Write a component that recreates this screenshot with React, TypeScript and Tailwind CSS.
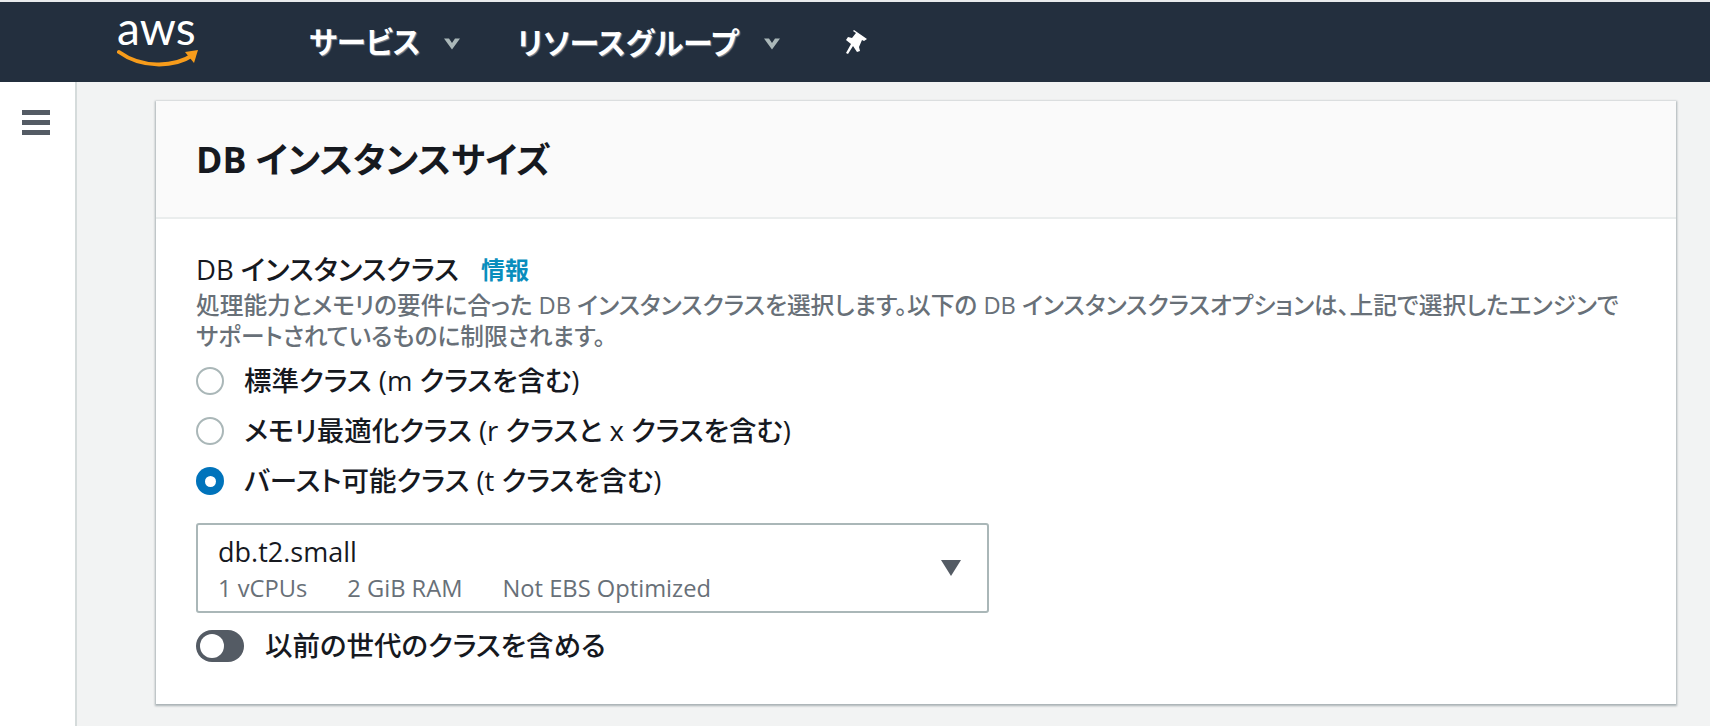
import React from "react";

const Radio = ({ checked, label }: { checked?: boolean; label: string }) => (
	<div className="flex items-center h-[28px]">
		{checked ? (
			<span className="w-[28px] h-[28px] rounded-full bg-[#0073bb] flex items-center justify-center">
				<span className="w-[11px] h-[11px] rounded-full bg-white" />
			</span>
		) : (
			<span className="w-[28px] h-[28px] rounded-full border-2 border-[#aab7b8] bg-white" />
		)}
		<span className="ml-[20px] text-[27.5px] leading-[28px] font-medium text-[#16191f]">
			{label}
		</span>
	</div>
);

const Caret = () => (
	<svg width="18" height="13" viewBox="0 0 18 13" className="ml-[23px] mt-[3px]">
		<path d="M1 1.5 L6 1.5 L9 6 L12 1.5 L17 1.5 L9 12.5 Z" fill="#aab7b8" />
	</svg>
);

const App = () => {
	return (
		<div className="w-[1710px] h-[726px] overflow-hidden flex flex-col bg-[#f2f3f3] font-['Open_Sans','Noto_Sans_CJK_JP',sans-serif] [font-feature-settings:'palt']">
			<div className="h-[2px] bg-[#e9ebed]" />
			<nav className="h-[80px] bg-[#232f3e] flex items-center">
				<div className="w-[309px] relative h-full">
					<span className="absolute left-[117px] top-[1px] text-[46px] leading-[50px] text-white font-['Lato',sans-serif]">
						aws
					</span>
					<svg width="84" height="26" viewBox="0 0 84 26" className="absolute left-[117px] top-[46px]">
						<path d="M2 4 C24 20 56 20 76 7" fill="none" stroke="#f79c1b" strokeWidth="4" strokeLinecap="round" />
						<path d="M68 4 L81 2 L77 15 Z" fill="#f79c1b" />
					</svg>
				</div>
				<div className="flex items-center w-[208px]">
					<span className="text-[29.5px] font-bold text-white [text-shadow:1px_1px_1px_#8a8f96]">サービス</span>
					<Caret />
				</div>
				<div className="flex items-center w-[333px]">
					<span className="mr-[2px] text-[30px] font-bold text-white [text-shadow:1px_1px_1px_#8a8f96]">リソースグループ</span>
					<Caret />
				</div>
				<svg width="26" height="28" viewBox="0 0 26 28" className="ml-[-5px]">
					<path d="M9 2 L22 11 L19 13 L17 12 L14 19 L15 23 L12 24 L8 18 L3 26 L1 25 L6 16 L1 12 L3 9 L7 10 L11 5 L8 3 Z" fill="#ffffff" />
				</svg>
			</nav>
			<div className="flex flex-1 min-h-0">
				<aside className="w-[77px] bg-white border-r-2 border-[#d5dbdb] pl-[22px] pt-[28px]">
					<div className="flex flex-col gap-[5px] w-[28px]">
						<span className="h-[5px] bg-[#545b64]" />
						<span className="h-[5px] bg-[#545b64]" />
						<span className="h-[5px] bg-[#545b64]" />
					</div>
				</aside>
				<main className="flex-1 pl-[79px] pr-[34px] pt-[19px]">
					<section className="h-[603px] bg-white shadow-[0_1px_2px_1px_rgba(0,28,36,0.3)]">
						<header className="h-[118px] bg-[#fafafa] border-b-2 border-[#eaeded] pl-[40px] pt-[2px] flex items-center">
							<h2 className="text-[35.7px] font-bold text-[#16191f]">DB インスタンスサイズ</h2>
						</header>
						<div className="pl-[40px] pr-[40px] pt-[33px]">
							<div className="flex items-center h-[36px]">
								<span className="text-[27.5px] font-medium text-[#16191f]">DB インスタンスクラス</span>
								<span className="ml-[22px] text-[24px] font-bold text-[#0a8ebd]">情報</span>
							</div>
							<p className="text-[23.7px] leading-[30.5px] font-medium text-[#687078] whitespace-nowrap pt-[2px]">
								処理能力とメモリの要件に合った DB インスタンスクラスを選択します。以下の DB インスタンスクラスオプションは、上記で選択したエンジンで
								<br />
								サポートされているものに制限されます。
							</p>
							<div className="flex flex-col gap-[22px] mt-[16px]">
								<Radio label="標準クラス (m クラスを含む)" />
								<Radio label="メモリ最適化クラス (r クラスと x クラスを含む)" />
								<Radio checked label="バースト可能クラス (t クラスを含む)" />
							</div>
							<div className="mt-[28px] w-[793px] h-[90px] border-2 border-[#aab7b8] rounded-[3px] pl-[20px] pr-[25px] flex items-center justify-between">
								<div className="pt-[2px]">
									<div className="text-[27px] leading-[36px] text-[#16191f]">db.t2.small</div>
									<div className="mt-[2px] text-[23.7px] leading-[32px] text-[#687078] flex gap-[40px]">
										<span>1 vCPUs</span>
										<span>2 GiB RAM</span>
										<span>Not EBS Optimized</span>
									</div>
								</div>
								<svg width="22" height="18" viewBox="0 0 22 18">
									<path d="M1 1 L21 1 L11 17 Z" fill="#545b64" />
								</svg>
							</div>
							<div className="flex items-center h-[32px] mt-[17px]">
								<span className="w-[48px] h-[32px] rounded-full bg-[#545b64] flex items-center pl-[4px]">
									<span className="w-[24px] h-[24px] rounded-full bg-white" />
								</span>
								<span className="ml-[21px] text-[27.5px] font-medium text-[#16191f]">以前の世代のクラスを含める</span>
							</div>
						</div>
					</section>
				</main>
			</div>
		</div>
	);
};

export default App;
